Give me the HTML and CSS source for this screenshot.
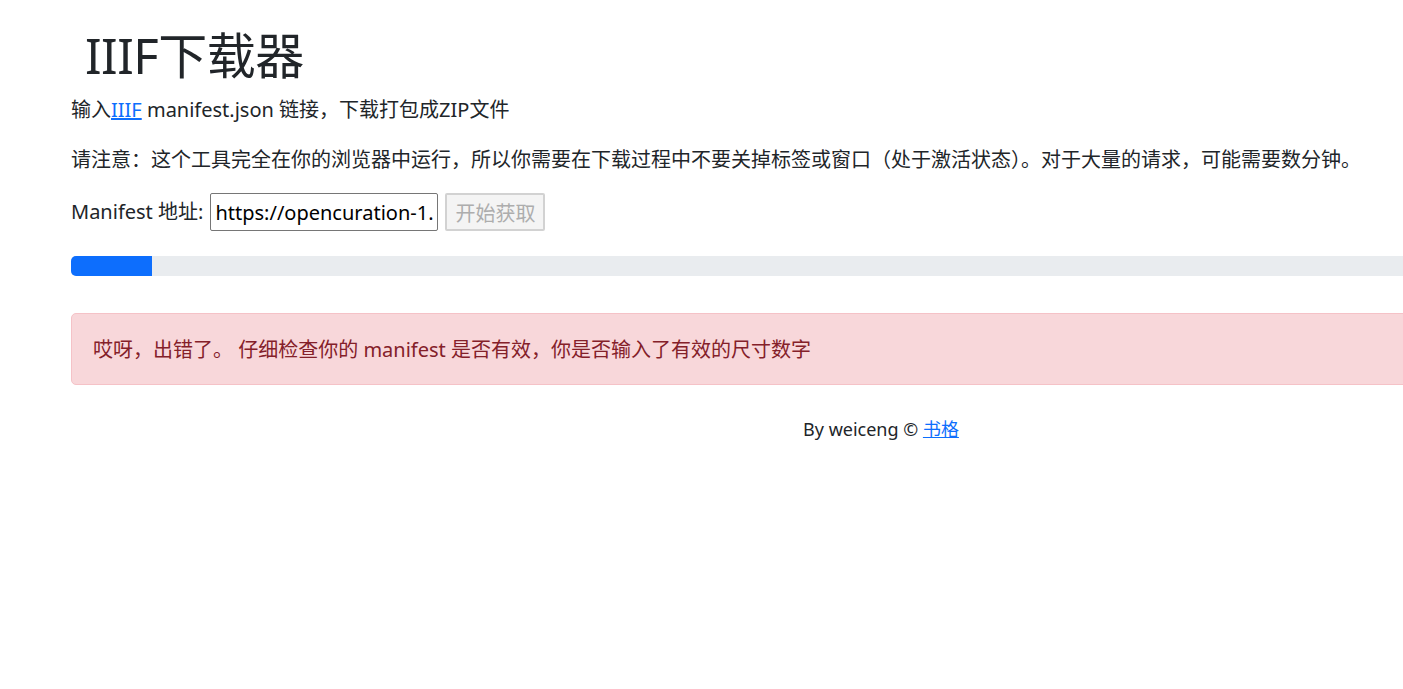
FILE: index.html
```html
<!DOCTYPE html>
<html lang="zh">
<head>
  <meta charset="utf-8">
  <title>IIIF下载器</title>
  <link rel="stylesheet" href="styles.css">
</head>
<body>
  <div class="container">
    <h1 class="title">IIIF下载器</h1>
    <p>输入<a href="#">IIIF</a> manifest.json 链接，下载打包成ZIP文件</p>
    <p>请注意：这个工具完全在你的浏览器中运行，所以你需要在下载过程中不要关掉标签或窗口（处于激活状态）。对于大量的请求，可能需要数分钟。</p>

    <!-- manifest form -->
    <div class="form-row">
      <label for="manifest">Manifest 地址:</label>
      <input type="text" id="manifest" value="https://opencuration-1.oss-cn-hangzhou.aliyuncs.com/manifest.json">
      <button class="fetch" disabled>开始获取</button>
    </div>

    <div class="progress">
      <div class="progress-bar" style="width: 5%"></div>
    </div>

    <div class="alert">哎呀，出错了。 仔细检查你的 manifest 是否有效，你是否输入了有效的尺寸数字</div>

    <footer class="footer">By weiceng © <a href="#">书格</a></footer>
  </div>
</body>
</html>
```

FILE: styles.css
```css
html, body {
  overflow-x: hidden;
}

body {
  margin: 0;
  padding: 0;
  font-family: "Noto Sans", "Noto Sans CJK SC", sans-serif;
  font-size: 20px;
  line-height: 1.5;
  color: #212529;
  background-color: #ffffff;
}

a {
  color: #0d6efd;
  text-decoration: underline;
}

.container {
  width: 1620px;
  padding-left: 71px;
  padding-top: 25px;
}

.title {
  font-size: 49px;
  font-weight: 400;
  line-height: 60px;
  margin: 0 0 10px 0;
  padding-left: 14px;
  letter-spacing: -0.5px;
}

p {
  margin: 0 0 20px 0;
}

.form-row {
  display: flex;
  align-items: center;
  height: 38px;
  margin-top: -2px;
}

.form-row label {
  margin-right: 7px;
}

#manifest {
  width: 228px;
  height: 38px;
  box-sizing: border-box;
  padding: 1px 4px;
  font-family: "Noto Sans", "Noto Sans CJK SC", sans-serif;
  font-size: 20px;
  color: #000;
  border: 1px solid #767676;
  border-radius: 2px;
}

.fetch {
  margin-left: 7px;
  width: 100px;
  height: 38px;
  font-family: "Noto Sans", "Noto Sans CJK SC", sans-serif;
  font-size: 20px;
  color: #adadad;
  background-color: #f4f4f4;
  border: 2px solid #d2d2d2;
  border-radius: 2px;
  padding: 0;
}

.progress {
  margin-top: 25px;
  height: 20px;
  background-color: #e9ecef;
  border-radius: 5px;
  overflow: hidden;
}

.progress-bar {
  height: 100%;
  background-color: #0d6efd;
}

.alert {
  margin-top: 37px;
  padding: 21px 21px 19px;
  color: #842029;
  background-color: #f8d7da;
  border: 1px solid #f5c2c7;
  border-radius: 5px;
}

.footer {
  margin-top: 29px;
  text-align: center;
  font-size: 18px;
  line-height: 30px;
}
```
